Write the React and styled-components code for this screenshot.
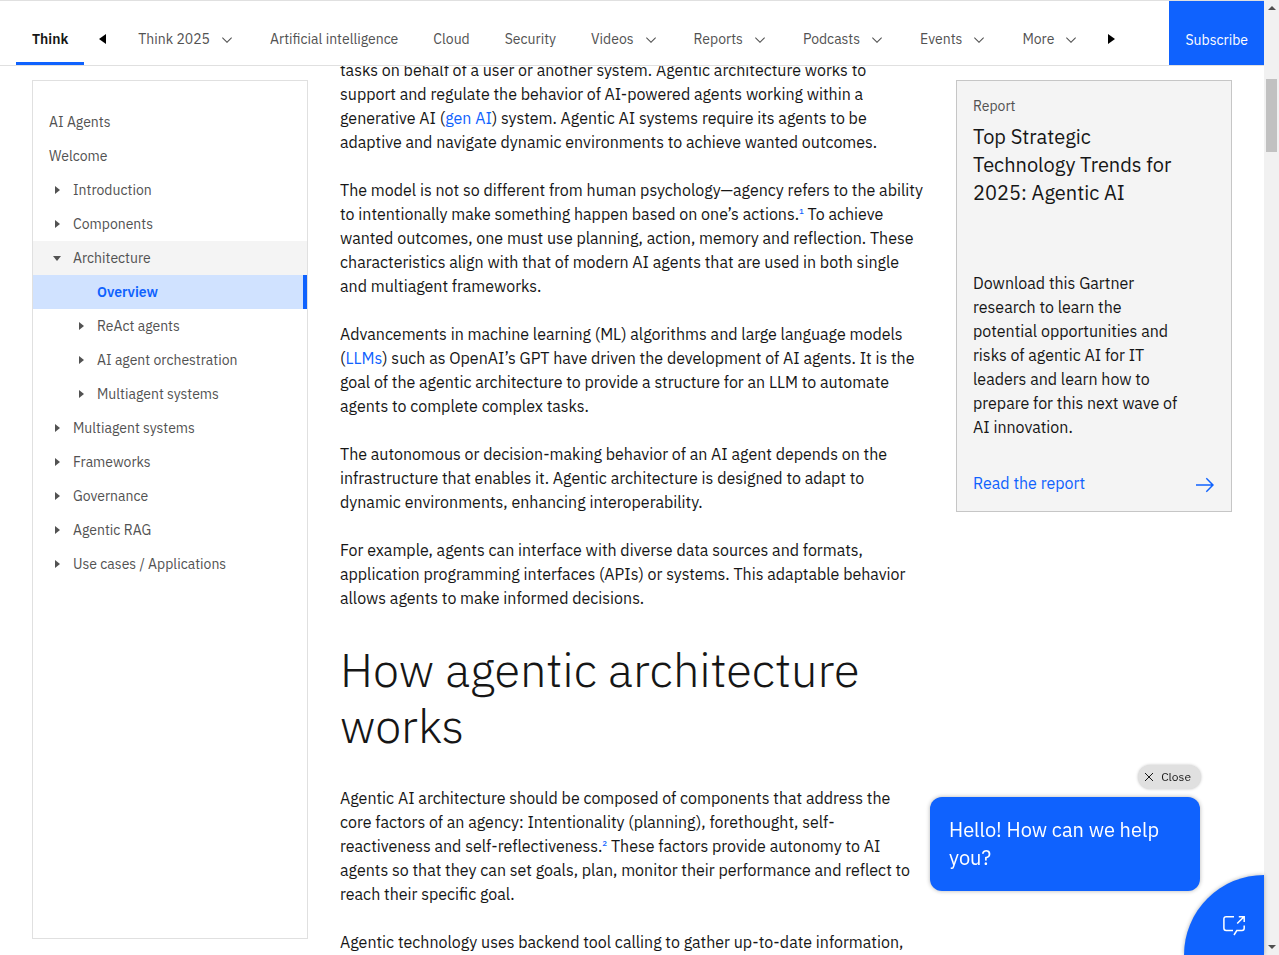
import React from "react";
import styled, { createGlobalStyle, css } from "styled-components";

const blue = "#0f62fe";
const ink = "#161616";
const muted = "#525252";
const line = "#e0e0e0";

const GlobalStyle = createGlobalStyle`
  *, *::before, *::after { box-sizing: border-box; }
  body {
    margin: 0;
    color: ${ink};
    background: #fff;
    font-family: "IBM Plex Sans", Roboto, "Liberation Sans", sans-serif;
    font-size: 16px;
    line-height: 24px;
  }
  button { font: inherit; border: 0; padding: 0; background: none; cursor: pointer; }
  a { text-decoration: none; }
`;

const Shell = styled.div`
  display: grid;
  grid-template-columns: minmax(0, 1fr) 15px;
  height: 100vh;
`;

const Page = styled.div`
  overflow: hidden;
`;

const Header = styled.header`
  position: relative;
  z-index: 2;
  display: flex;
  height: 66px;
  padding-left: 16px;
  background: #fff;
  border-top: 1px solid ${line};
  border-bottom: 1px solid ${line};
  font-size: 14px;
  line-height: 18px;
`;

const HomeTab = styled.a`
  display: flex;
  align-items: center;
  height: 64px;
  padding: 15px 16px 0;
  border-bottom: 3px solid ${blue};
  color: ${ink};
  font-weight: 600;
`;

const ScrollButton = styled.button`
  display: flex;
  align-items: center;
  justify-content: center;
  width: 16px;
  padding-top: 12px;
  margin: ${(p) => (p.$end ? "0 0 0 24px" : "0 28px 0 10px")};
`;

const Menu = styled.nav`
  display: flex;
  gap: 35px;
  padding-top: 12px;
`;

const MenuItem = styled.a`
  display: flex;
  align-items: center;
  gap: 9px;
  color: ${muted};
  white-space: nowrap;
`;

const Subscribe = styled.a`
  display: flex;
  align-items: center;
  margin-left: auto;
  padding: 14px 16px 0;
  background: ${blue};
  color: #fff;
`;

const Columns = styled.div`
  display: grid;
  grid-template-columns: repeat(4, minmax(0, 1fr));
  gap: 32px;
  align-items: start;
  padding: 0 32px;
`;

const Sidebar = styled.nav`
  height: calc(100vh - 96px);
  margin-top: 14px;
  padding-top: 24px;
  border: 1px solid ${line};
  font-size: 14px;
  line-height: 18px;
`;

const indents = { 0: "16px", 1: "16px", 2: "40px", leaf: "64px" };

const SideLink = styled.a`
  display: flex;
  align-items: center;
  gap: 8px;
  height: 34px;
  padding-left: ${(p) => indents[p.$level]};
  color: ${muted};
  ${(p) => p.$open && css`background: #f4f4f4;`}
  ${(p) =>
    p.$current &&
    css`
      background: #d0e2ff;
      color: ${blue};
      font-weight: 600;
      border-right: 4px solid ${blue};
    `}
`;

const Article = styled.article`
  grid-column: span 2;
  margin-top: -8px;
`;

const Paragraph = styled.p`
  margin: 0 0 24px;
`;

const Heading = styled.h2`
  margin: 32px 0;
  font-size: 47px;
  line-height: 56px;
  font-weight: 300;
`;

const TextLink = styled.a`
  color: ${blue};
`;

const Note = styled.sup`
  font-size: 8px;
  line-height: 8px;
  font-weight: 500;
`;

const Card = styled.aside`
  display: flex;
  flex-direction: column;
  margin-top: 14px;
  padding: 16px;
  background: #f4f4f4;
  border: 1px solid #c6c6c6;
`;

const CardLabel = styled.div`
  margin-bottom: 8px;
  color: ${muted};
  font-size: 14px;
  line-height: 18px;
`;

const CardTitle = styled.h3`
  margin: 0 32px 64px 0;
  font-size: 20px;
  line-height: 28px;
  font-weight: 400;
`;

const CardText = styled.p`
  margin: 0 32px 32px 0;
`;

const CardLink = styled.a`
  display: flex;
  align-items: flex-end;
  justify-content: space-between;
  color: ${blue};
`;

const Chat = styled.div`
  position: fixed;
  right: 15px;
  bottom: 0;
  z-index: 3;
`;

const CloseButton = styled.button`
  && {
    position: absolute;
    right: 63px;
    bottom: 166px;
    display: flex;
    align-items: center;
    gap: 6px;
    height: 24px;
    padding: 0 10px 0 5px;
    border-radius: 12px;
    background: ${line};
    color: ${ink};
    font-size: 12px;
    line-height: 16px;
    box-shadow: 0 0 3px rgba(0, 0, 0, 0.25);
  }
`;

const Bubble = styled.div`
  position: absolute;
  right: 64px;
  bottom: 64px;
  width: 270px;
  padding: 19px;
  border-radius: 12px;
  background: ${blue};
  color: #fff;
  font-size: 20px;
  line-height: 28px;
  font-weight: 400;
  box-shadow: 0 0 4px rgba(0, 0, 0, 0.3);
`;

const Launcher = styled.button`
  && {
    display: block;
    width: 80px;
    height: 80px;
    padding: 20px 0 0 38px;
    border-radius: 80px 0 0 0;
    background: ${blue};
    box-shadow: 0 0 4px rgba(0, 0, 0, 0.3);
  }
`;

const Track = styled.div`
  display: flex;
  flex-direction: column;
  align-items: center;
  justify-content: space-between;
  background: #f1f1f1;
`;

const Thumb = styled.div`
  width: 11px;
  height: 73px;
  margin: 63px 0 auto;
  background: #c1c1c1;
`;

const Icon = styled.svg`
  display: block;
  flex: none;
`;

const Chevron = () => (
  <Icon width="16" height="16" viewBox="0 0 16 16" fill="currentColor" aria-hidden="true">
    <path d="M8 12L3 7 3.7 6.3 8 10.600 12.3 6.3 13 7z" />
  </Icon>
);

const Caret = ({ open }) => (
  <Icon width="16" height="16" viewBox="0 0 16 16" fill="currentColor" aria-hidden="true">
    <path d={open ? "M12 6L8 11 4 6z" : "M6 4L11 8 6 12z"} />
  </Icon>
);

const ScrollArrow = ({ left }) => (
  <Icon width="16" height="16" viewBox="0 0 16 16" fill="#000" aria-hidden="true">
    <path d={left ? "M12 3v10L5 8z" : "M5 3v10L12 8z"} />
  </Icon>
);

const TrackArrow = ({ down }) => (
  <Icon width="15" height="16" viewBox="0 0 15 16" fill="#505050" aria-hidden="true">
    <path d={down ? "M4 6h8L8 10z" : "M4 10h8L8 6z"} />
  </Icon>
);

const menu = [
  ["Think 2025", true],
  ["Artificial intelligence", false],
  ["Cloud", false],
  ["Security", false],
  ["Videos", true],
  ["Reports", true],
  ["Podcasts", true],
  ["Events", true],
  ["More", true],
];

const topics = [
  { label: "AI Agents", level: 0 },
  { label: "Welcome", level: 0 },
  { label: "Introduction", level: 1 },
  { label: "Components", level: 1 },
  { label: "Architecture", level: 1, open: true },
  { label: "Overview", level: "leaf", current: true },
  { label: "ReAct agents", level: 2 },
  { label: "AI agent orchestration", level: 2 },
  { label: "Multiagent systems", level: 2 },
  { label: "Multiagent systems", level: 1 },
  { label: "Frameworks", level: 1 },
  { label: "Governance", level: 1 },
  { label: "Agentic RAG", level: 1 },
  { label: "Use cases / Applications", level: 1 },
];

export default function App() {
  return (
    <Shell>
      <GlobalStyle />
      <Page>
        <Header>
          <HomeTab href="#think">Think</HomeTab>
          <ScrollButton aria-label="Scroll left"><ScrollArrow left /></ScrollButton>
          <Menu aria-label="Topics">
            {menu.map(([label, more]) => (
              <MenuItem key={label} href="#menu">
                {label}
                {more && <Chevron />}
              </MenuItem>
            ))}
          </Menu>
          <ScrollButton $end aria-label="Scroll right"><ScrollArrow /></ScrollButton>
          <Subscribe href="#subscribe">Subscribe</Subscribe>
        </Header>
        <Columns>
          <Sidebar aria-label="Contents">
            {topics.map((t, i) => (
              <SideLink key={i} href="#topic" $level={t.level} $open={t.open} $current={t.current}>
                {(t.level === 1 || t.level === 2) && <Caret open={t.open} />}
                {t.label}
              </SideLink>
            ))}
          </Sidebar>
          <Article>
            <Paragraph>
              tasks on behalf of a user or another system. Agentic architecture works to
              support and regulate the behavior of AI-powered agents working within a
              generative AI (<TextLink href="#gen-ai">gen AI</TextLink>) system. Agentic AI systems require its agents to be
              adaptive and navigate dynamic environments to achieve wanted outcomes.
            </Paragraph>
            <Paragraph>
              The model is not so different from human psychology—agency refers to the ability
              to intentionally make something happen based on one’s actions.<Note><TextLink href="#note-1">1</TextLink></Note> To achieve
              wanted outcomes, one must use planning, action, memory and reflection. These
              characteristics align with that of modern AI agents that are used in both single
              and multiagent frameworks.
            </Paragraph>
            <Paragraph>
              Advancements in machine learning (ML) algorithms and large language models
              (<TextLink href="#llms">LLMs</TextLink>) such as OpenAI’s GPT have driven the development of AI agents. It is the
              goal of the agentic architecture to provide a structure for an LLM to automate
              agents to complete complex tasks.
            </Paragraph>
            <Paragraph>
              The autonomous or decision-making behavior of an AI agent depends on the
              infrastructure that enables it. Agentic architecture is designed to adapt to
              dynamic environments, enhancing interoperability.
            </Paragraph>
            <Paragraph>
              For example, agents can interface with diverse data sources and formats,
              application programming interfaces (APIs) or systems. This adaptable behavior
              allows agents to make informed decisions.
            </Paragraph>
            <Heading>How agentic architecture works</Heading>
            <Paragraph>
              Agentic AI architecture should be composed of components that address the
              core factors of an agency: Intentionality (planning), forethought, self-reactiveness
              and self-reflectiveness.<Note><TextLink href="#note-2">2</TextLink></Note> These factors provide autonomy to AI
              agents so that they can set goals, plan, monitor their performance and reflect to
              reach their specific goal.
            </Paragraph>
            <Paragraph>
              Agentic technology uses backend tool calling to gather up-to-date information,
            </Paragraph>
          </Article>
          <Card>
            <CardLabel>Report</CardLabel>
            <CardTitle>Top Strategic Technology Trends for 2025: Agentic AI</CardTitle>
            <CardText>
              Download this Gartner research to learn the potential opportunities and risks of
              agentic AI for IT leaders and learn how to prepare for this next wave of AI
              innovation.
            </CardText>
            <CardLink href="#report">
              Read the report
              <Icon width="20" height="20" viewBox="0 0 20 20" fill="currentColor" aria-hidden="true">
                <path d="M11.8 2.8L10.8 3.8 16.2 9.3 1 9.3 1 10.7 16.2 10.7 10.8 16.2 11.8 17.2 19 10z" />
              </Icon>
            </CardLink>
          </Card>
        </Columns>
      </Page>
      <Track aria-hidden="true">
        <TrackArrow />
        <Thumb />
        <TrackArrow down />
      </Track>
      <Chat>
        <CloseButton>
          <Icon width="12" height="12" viewBox="0 0 12 12" fill="none" stroke="currentColor" aria-hidden="true">
            <path d="M2 2l8 8M10 2l-8 8" />
          </Icon>
          Close
        </CloseButton>
        <Bubble>Hello! How can we help you?</Bubble>
        <Launcher aria-label="Open chat">
          <Icon width="24" height="24" viewBox="0 0 24 24" fill="none" stroke="#fff" strokeWidth="1.5" aria-hidden="true">
            <path d="M12 3.7H4.2C2.7 3.7 1.9 4.5 1.9 5.900v9.400c0 1.400.8 2.200 2.300 2.200H11" />
            <path d="M12 22l2.800-4.500h5.200c1.400 0 2.200-.8 2.200-2.200V12.500" />
            <path d="M15.200 10.500l6.800-6.800M16.800 3.700h5.400v5.400" />
          </Icon>
        </Launcher>
      </Chat>
    </Shell>
  );
}
